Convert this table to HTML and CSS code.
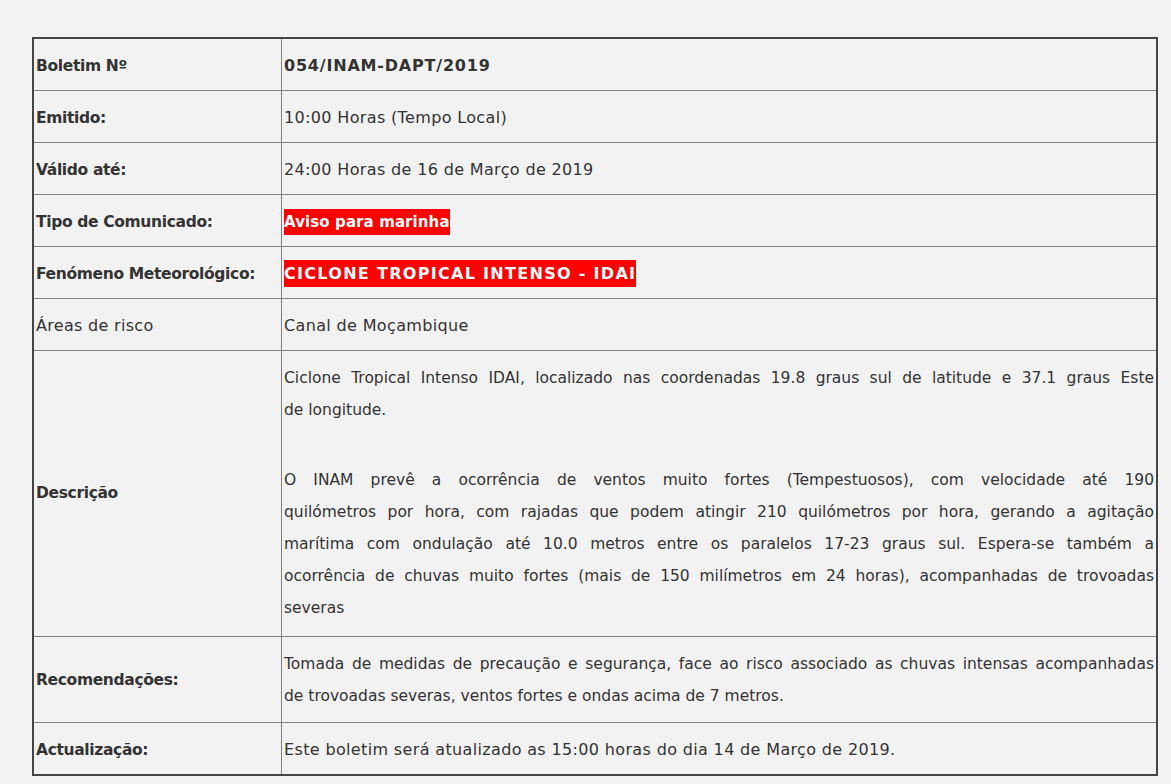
FILE: index.html
```html
<!DOCTYPE html>
<html lang="pt">
<head>
  <meta charset="UTF-8">
  <title>Boletim 054/INAM-DAPT/2019</title>
  <link rel="stylesheet" href="styles.css">
</head>
<body>

  <table class="boletim">
    <tr>
      <td class="label">Boletim Nº</td>
      <td class="value strong">054/INAM-DAPT/2019</td>
    </tr>
    <tr>
      <td class="label">Emitido:</td>
      <td class="value">10:00 Horas (Tempo Local)</td>
    </tr>
    <tr>
      <td class="label">Válido até:</td>
      <td class="value">24:00 Horas de 16 de Março de 2019</td>
    </tr>
    <tr>
      <td class="label">Tipo de Comunicado:</td>
      <td class="value"><span class="alert">Aviso para marinha</span></td>
    </tr>
    <tr>
      <td class="label">Fenómeno Meteorológico:</td>
      <td class="value"><span class="alert caps">CICLONE TROPICAL INTENSO - IDAI</span></td>
    </tr>
    <tr>
      <td class="label plain">Áreas de risco</td>
      <td class="value">Canal de Moçambique</td>
    </tr>
    <tr class="desc">
      <td class="label">Descrição</td>
      <td class="value text">
        <p>
          <span class="line">Ciclone Tropical Intenso IDAI, localizado nas coordenadas 19.8 graus sul de latitude e 37.1 graus Este</span>
          <span class="line last">de longitude.</span>
        </p>
        <p>
          <span class="line">O INAM prevê a ocorrência de ventos muito fortes (Tempestuosos), com velocidade até 190</span>
          <span class="line">quilómetros por hora, com rajadas que podem atingir 210 quilómetros por hora, gerando a agitação</span>
          <span class="line">marítima com ondulação até 10.0 metros entre os paralelos 17-23 graus sul. Espera-se também a</span>
          <span class="line">ocorrência de chuvas muito fortes (mais de 150 milímetros em 24 horas), acompanhadas de trovoadas</span>
          <span class="line last">severas</span>
        </p>
      </td>
    </tr>
    <tr class="rec">
      <td class="label">Recomendações:</td>
      <td class="value text">
        <span class="line">Tomada de medidas de precaução e segurança, face ao risco associado as chuvas intensas acompanhadas</span>
        <span class="line last">de trovoadas severas, ventos fortes e ondas acima de 7 metros.</span>
      </td>
    </tr>
    <tr>
      <td class="label">Actualização:</td>
      <td class="value">Este boletim será atualizado as 15:00 horas do dia 14 de Março de 2019.</td>
    </tr>
  </table>

</body>
</html>
```

FILE: styles.css
```css
html, body {
  margin: 0;
  padding: 0;
  background: #f2f2f2;
}

body {
  font-family: 'Comic Sans MS', 'DejaVu Sans', sans-serif;
  font-size: 16px;
  color: #333;
}

.boletim {
  width: 1126px;
  margin: 37px 0 0 32px;
  border-collapse: collapse;
  border: 2px solid #444;
}

.boletim td {
  border: 1px solid #808080;
  padding: 11px 2px 8px;
  line-height: 32px;
  vertical-align: middle;
}

.boletim .desc td {
  padding-bottom: 12px;
}

.boletim .rec td {
  padding-bottom: 10px;
}

.label {
  width: 243px;
  font-size: 15.5px;
  font-weight: bold;
  letter-spacing: -0.35px;
}

.label.plain {
  font-size: 16px;
  font-weight: normal;
  letter-spacing: 0.3px;
}

.value {
  text-align: justify;
  letter-spacing: 0.35px;
}

.value.text {
  font-size: 15.5px;
  letter-spacing: 0;
}

.value p {
  margin: 0;
}

.value p + p {
  margin-top: 38px;
}

.line {
  display: block;
  text-align-last: justify;
}

.line.last {
  text-align-last: left;
}

.strong {
  font-weight: bold;
  letter-spacing: 0.8px;
}

.alert {
  padding: 4px 0 4px;
  background: #ff0000;
  color: #fff;
  font-size: 15px;
  font-weight: bold;
  letter-spacing: 0.1px;
}

.alert.caps {
  font-size: 16px;
  letter-spacing: 1.3px;
}
```
